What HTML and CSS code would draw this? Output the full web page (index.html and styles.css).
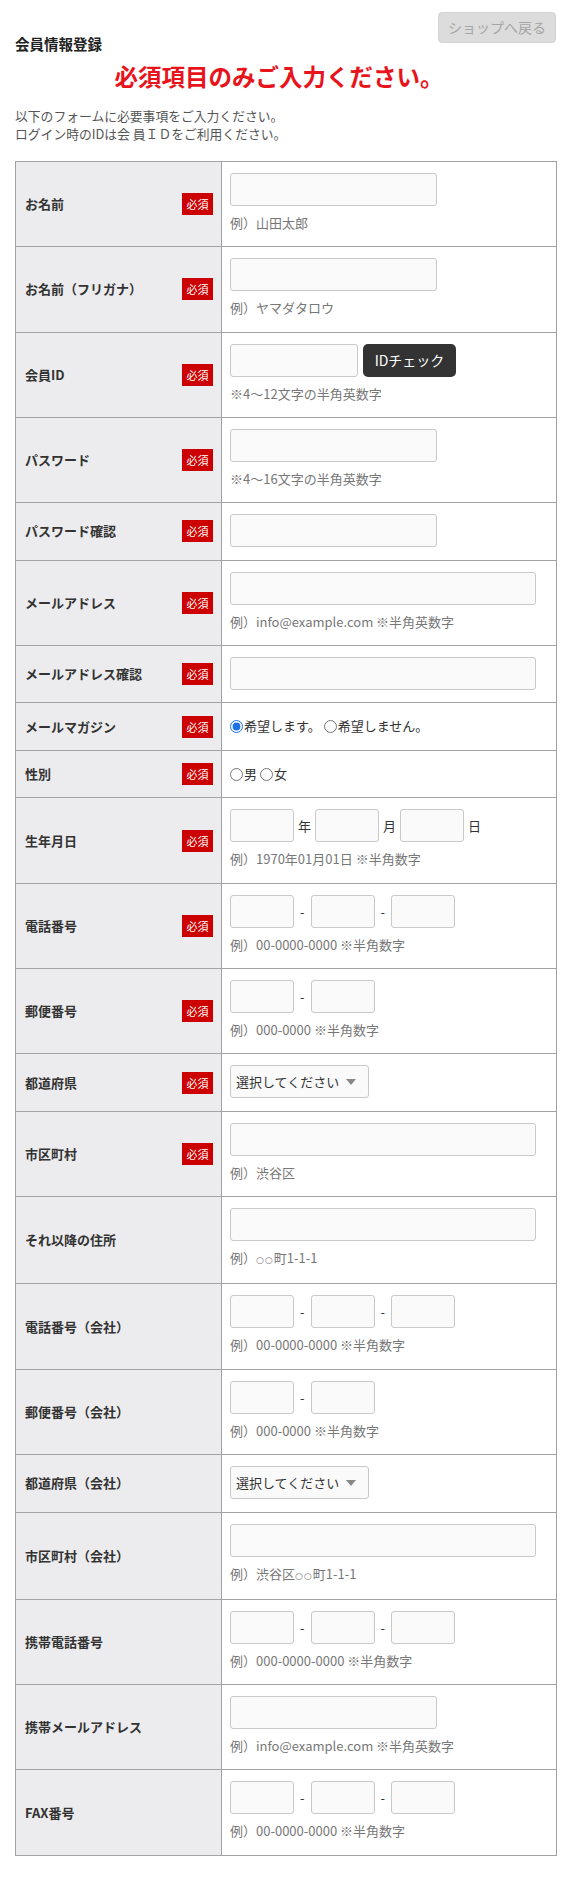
FILE: index.html
```html
<!DOCTYPE html>
<html lang="ja">
<head>
    <meta charset="UTF-8">
    <meta name="viewport" content="width=device-width, initial-scale=1.0">
    <title>会員情報登録</title>
    <link rel="stylesheet" href="styles.css">
</head>
<body>
<div class="wrap">

    <div class="page-head">
        <h1>会員情報登録</h1>
        <button type="button" class="back-btn">ショップへ戻る</button>
    </div>

    <p class="lead-title">必須項目のみご入力ください。</p>

    <p class="intro">以下のフォームに必要事項をご入力ください。<br>ログイン時のIDは会 員ＩＤをご利用ください。</p>

    <form id="memberForm">
    <table class="form-table">
        <colgroup>
            <col class="col-label">
            <col>
        </colgroup>
        <tr>
            <th><div class="label"><span>お名前</span><span class="req">必須</span></div></th>
            <td>
                <input type="text" class="text-input w-m">
                <div class="note">例）山田太郎</div>
            </td>
        </tr>
        <tr>
            <th><div class="label"><span>お名前（フリガナ）</span><span class="req">必須</span></div></th>
            <td>
                <input type="text" class="text-input w-m">
                <div class="note">例）ヤマダタロウ</div>
            </td>
        </tr>
        <tr>
            <th><div class="label"><span>会員ID</span><span class="req">必須</span></div></th>
            <td>
                <div class="field-row">
                    <input type="text" class="text-input w-s">
                    <button type="button" class="check-btn">IDチェック</button>
                </div>
                <div class="note">※4～12文字の半角英数字</div>
            </td>
        </tr>
        <tr>
            <th><div class="label"><span>パスワード</span><span class="req">必須</span></div></th>
            <td>
                <input type="password" class="text-input w-m">
                <div class="note">※4～16文字の半角英数字</div>
            </td>
        </tr>
        <tr>
            <th><div class="label"><span>パスワード確認</span><span class="req">必須</span></div></th>
            <td>
                <input type="password" class="text-input w-m">
            </td>
        </tr>
        <tr>
            <th><div class="label"><span>メールアドレス</span><span class="req">必須</span></div></th>
            <td>
                <input type="text" class="text-input w-l">
                <div class="note">例）info@example.com ※半角英数字</div>
            </td>
        </tr>
        <tr>
            <th><div class="label"><span>メールアドレス確認</span><span class="req">必須</span></div></th>
            <td>
                <input type="text" class="text-input w-l">
            </td>
        </tr>
        <tr>
            <th><div class="label"><span>メールマガジン</span><span class="req">必須</span></div></th>
            <td>
                <div class="radio-line">
                    <label><input type="radio" name="mailmag" checked>希望します。</label>
                    <label><input type="radio" name="mailmag">希望しません。</label>
                </div>
            </td>
        </tr>
        <tr>
            <th><div class="label"><span>性別</span><span class="req">必須</span></div></th>
            <td>
                <div class="radio-line">
                    <label><input type="radio" name="sex">男</label>
                    <label><input type="radio" name="sex">女</label>
                </div>
            </td>
        </tr>
        <tr>
            <th><div class="label"><span>生年月日</span><span class="req">必須</span></div></th>
            <td>
                <div class="field-row">
                    <input type="text" class="text-input w-xs">
                    <span class="unit">年</span>
                    <input type="text" class="text-input w-xs">
                    <span class="unit">月</span>
                    <input type="text" class="text-input w-xs">
                    <span class="unit">日</span>
                </div>
                <div class="note">例）1970年01月01日 ※半角数字</div>
            </td>
        </tr>
        <tr>
            <th><div class="label"><span>電話番号</span><span class="req">必須</span></div></th>
            <td>
                <div class="field-row">
                    <input type="text" class="text-input w-xs">
                    <span class="sep">-</span>
                    <input type="text" class="text-input w-xs">
                    <span class="sep">-</span>
                    <input type="text" class="text-input w-xs">
                </div>
                <div class="note">例）00-0000-0000 ※半角数字</div>
            </td>
        </tr>
        <tr>
            <th><div class="label"><span>郵便番号</span><span class="req">必須</span></div></th>
            <td>
                <div class="field-row">
                    <input type="text" class="text-input w-xs">
                    <span class="sep">-</span>
                    <input type="text" class="text-input w-xs">
                </div>
                <div class="note">例）000-0000 ※半角数字</div>
            </td>
        </tr>
        <tr>
            <th><div class="label"><span>都道府県</span><span class="req">必須</span></div></th>
            <td>
                <span class="select-wrap">
                    <select class="select-box">
                        <option>選択してください</option>
                    </select>
                </span>
            </td>
        </tr>
        <tr>
            <th><div class="label"><span>市区町村</span><span class="req">必須</span></div></th>
            <td>
                <input type="text" class="text-input w-l">
                <div class="note">例）渋谷区</div>
            </td>
        </tr>
        <tr>
            <th><div class="label"><span>それ以降の住所</span></div></th>
            <td>
                <input type="text" class="text-input w-l">
                <div class="note">例）<span class="circ">○○</span>町1-1-1</div>
            </td>
        </tr>
        <tr>
            <th><div class="label"><span>電話番号（会社）</span></div></th>
            <td>
                <div class="field-row">
                    <input type="text" class="text-input w-xs">
                    <span class="sep">-</span>
                    <input type="text" class="text-input w-xs">
                    <span class="sep">-</span>
                    <input type="text" class="text-input w-xs">
                </div>
                <div class="note">例）00-0000-0000 ※半角数字</div>
            </td>
        </tr>
        <tr>
            <th><div class="label"><span>郵便番号（会社）</span></div></th>
            <td>
                <div class="field-row">
                    <input type="text" class="text-input w-xs">
                    <span class="sep">-</span>
                    <input type="text" class="text-input w-xs">
                </div>
                <div class="note">例）000-0000 ※半角数字</div>
            </td>
        </tr>
        <tr>
            <th><div class="label"><span>都道府県（会社）</span></div></th>
            <td>
                <span class="select-wrap">
                    <select class="select-box">
                        <option>選択してください</option>
                    </select>
                </span>
            </td>
        </tr>
        <tr>
            <th><div class="label"><span>市区町村（会社）</span></div></th>
            <td>
                <input type="text" class="text-input w-l">
                <div class="note">例）渋谷区<span class="circ">○○</span>町1-1-1</div>
            </td>
        </tr>
        <tr>
            <th><div class="label"><span>携帯電話番号</span></div></th>
            <td>
                <div class="field-row">
                    <input type="text" class="text-input w-xs">
                    <span class="sep">-</span>
                    <input type="text" class="text-input w-xs">
                    <span class="sep">-</span>
                    <input type="text" class="text-input w-xs">
                </div>
                <div class="note">例）000-0000-0000 ※半角数字</div>
            </td>
        </tr>
        <tr>
            <th><div class="label"><span>携帯メールアドレス</span></div></th>
            <td>
                <input type="text" class="text-input w-m">
                <div class="note">例）info@example.com ※半角英数字</div>
            </td>
        </tr>
        <tr>
            <th><div class="label"><span>FAX番号</span></div></th>
            <td>
                <div class="field-row">
                    <input type="text" class="text-input w-xs">
                    <span class="sep">-</span>
                    <input type="text" class="text-input w-xs">
                    <span class="sep">-</span>
                    <input type="text" class="text-input w-xs">
                </div>
                <div class="note">例）00-0000-0000 ※半角数字</div>
            </td>
        </tr>
    </table>
    </form>

</div>
</body>
</html>
```

FILE: styles.css
```css
* {
    box-sizing: border-box;
}
body {
    margin: 0;
    font-family: "Noto Sans CJK JP", "Noto Sans", sans-serif;
    color: #333;
    background: #fff;
}

.wrap { width: 542px; margin-left: 15px; padding-bottom: 33px; }

/* header */
.page-head {
    display: flex; justify-content: space-between; align-items: flex-start;
    padding-top: 12px;
}
.page-head h1 {
    margin: 22px 0 0; font-size: 14.5px; line-height: 20px; font-weight: bold; color: #222;
}
.back-btn {
    width: 118px; height: 31px; margin-right: 1px; padding: 0;
    background: #dcdcdc; color: #a6a6a6; border: 1px solid #d2d2d2; border-radius: 4px;
    font-family: inherit; font-size: 14px; line-height: 29px;
}

.lead-title {
    margin: 7px 0 0; padding-right: 14px; text-align: center;
    font-size: 23.5px; line-height: 30px; font-weight: bold; color: #e8141c;
}
.intro {
    margin: 16px 0 0; font-size: 12.8px; line-height: 18px; color: #555;
}

/* form table */
.form-table {
    width: 542px; margin-top: 18px; border-collapse: collapse; table-layout: fixed;
}
.col-label { width: 206px; }
.form-table th,
.form-table td { border: 1px solid #a3a3a3; vertical-align: middle; }
.form-table th {
    background: #ececee; text-align: left; padding: 0 8px 0 9px;
    font-size: 13px; font-weight: bold; color: #333; line-height: 20px;
}
.form-table td { padding: 11px 8px 12.5px; background: #fff; }

.label { display: flex; justify-content: space-between; align-items: center; }
.req {
    width: 31px; height: 22px; line-height: 22px; text-align: center;
    background: #cc0000; color: #fff; font-size: 11px; font-weight: normal;
}

.text-input {
    display: block; height: 33px; padding: 0 6px;
    border: 1px solid #c9c9c9; border-radius: 3px; background: #fafafa;
    font-family: inherit; font-size: 13px;
}
.field-row .text-input { display: inline-block; }
.w-m { width: 207px; }
.w-l { width: 306px; }
.w-s { width: 128px; }
.w-xs { width: 64px; }

.field-row { display: flex; align-items: center; }
.unit { margin: 0 4px; font-size: 13px; color: #333; }
.sep { margin: 0 6px; font-size: 13px; color: #333; }

.check-btn {
    width: 93px; height: 33px; margin-left: 5px; padding: 0;
    background: #333; color: #fff; border: none; border-radius: 5px;
    font-family: inherit; font-size: 14px;
}

.note { margin: 7px 0 0.8px; font-size: 13px; line-height: 20px; color: #777; }
.circ { font-family: "DejaVu Sans", sans-serif; font-size: 9px; letter-spacing: 1px; }

.radio-line { font-size: 13px; line-height: 23px; color: #333; }
.radio-line input {
    width: 13px; height: 13px; margin: 0 1px 0 0; vertical-align: -2px;
    accent-color: #1a73e8;
}

.select-wrap { position: relative; display: inline-block; }
.select-box {
    appearance: none; -webkit-appearance: none;
    width: 139px; height: 33px; padding: 0 20px 0 5px;
    border: 1px solid #c9c9c9; border-radius: 3px; background: #fafafa;
    font-family: inherit; font-size: 13px; color: #333;
}
.select-wrap::after {
    content: ""; position: absolute; right: 13px; top: 14px;
    border-left: 5px solid transparent; border-right: 5px solid transparent;
    border-top: 6px solid #888;
}
```
